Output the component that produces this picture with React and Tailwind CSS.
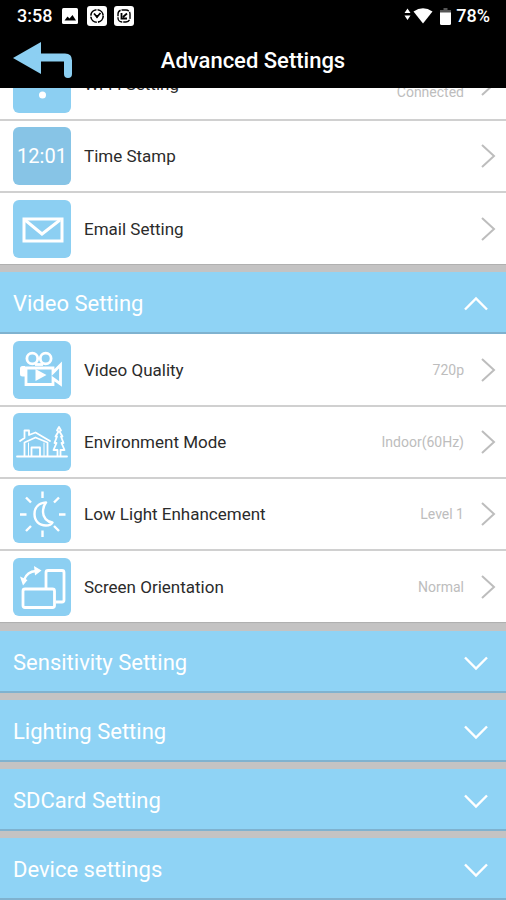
import React from 'react';
import clsx from 'clsx';

const WifiIcon = () => (
    <svg viewBox="0 0 58 58" className="size-full" fill="none" stroke="white" strokeWidth="4" strokeLinecap="round">
        <path d="M10 15 Q29 -1 49 15 M16 22 Q29 11 43 22 M22 28 Q29 23 37 28" />
        <circle cx="29.5" cy="40" r="3.5" fill="white" stroke="none" />
    </svg>
);

const ClockIcon = () => (
    <svg viewBox="0 0 58 58" className="size-full" fill="white">
        <text x="29" y="36" textAnchor="middle" fontSize="20">12:01</text>
    </svg>
);

const MailIcon = () => (
    <svg viewBox="0 0 58 58" className="size-full" fill="none" stroke="white" strokeWidth="3">
        <rect x="11" y="19" width="38" height="22" />
        <path d="M12 20 L29 34 L47 20" />
    </svg>
);

const CameraIcon = () => (
    <svg viewBox="0 0 58 58" className="size-full" fill="none" stroke="white" strokeWidth="2.8">
        <circle cx="19.3" cy="17.5" r="5.4" />
        <circle cx="32.7" cy="17.5" r="5.4" />
        <path d="M22 23.5 H30" />
        <path d="M13 27 H40 V31.500 L47.500 24 V43 L40 37.500 V43.500 H13 Z" />
        <path d="M12 25 H9.500 Q7 25 7 27.500 V33 Q7 35.500 9.500 35.500 H12 Z" fill="white" stroke="none" />
        <path d="M22.500 28 L33.500 34 L22.500 40 Z" fill="white" stroke="none" />
    </svg>
);

const HouseIcon = () => (
    <svg viewBox="0 0 58 58" className="size-full" fill="none" stroke="white" strokeWidth="1.8" strokeLinejoin="round" strokeLinecap="round">
        <path d="M4 43.500 H54" />
        <path d="M7 28 L11.500 25 V17.500 H16 V22 L22.500 19.500 L37 28" />
        <path d="M11.500 43 V29.500 L22.500 24.500 L34.500 29.500 V43" />
        <path d="M15.500 43 V30 M31 43 V30" strokeWidth="1" />
        <path d="M18.500 43 V34.500 H27 V43" />
        <path d="M46 14 L48 17.500 L46.500 18.500 L49.500 23.500 H48 L50.500 30 H48.500 L51.500 37 H47.500 V43 M46 14 L44 17.500 L45.500 18.500 L42.500 23.500 H44 L41.500 30 H43.500 L40.500 37 H44.500 V43" />
    </svg>
);

const MoonIcon = () => (
    <svg viewBox="0 0 58 58" className="size-full" fill="none" stroke="white" strokeWidth="2.4" strokeLinejoin="round">
        <path d="M33 17.500 C25 18 21.500 23 21.500 29 C21.500 36 26 40.500 33 40.500 C36 40.500 38.500 39.500 39.500 37.500 C34 37 30 32.500 30 27 C30 23 31 20 33 17.500 Z" />
        <path d="M29.500 6.500 V13 M29.500 45.500 V52 M7 29.500 H13.500 M46 29.500 H52.500 M13 12.500 L18 17.500 M46 12.500 L41 17.500 M13 46 L18 41 M46 46 L41 41" />
    </svg>
);

const RotateIcon = () => (
    <svg viewBox="0 0 58 58" className="size-full" fill="none" stroke="white" strokeWidth="2.8">
        <path d="M33 30 V14.500 Q33 12.500 35 12.500 H49 Q51 12.500 51 14.500 V42 Q51 44 49 44 H43" />
        <rect x="10" y="31" width="31.500" height="18.500" rx="2" />
        <path d="M11 22 Q14 13.500 23 13" strokeWidth="2.400" />
        <path d="M21 8 L28.500 12.500 L22 17.500 Z M7 18.500 L14.500 22 L10 27.500 Z" fill="white" stroke="none" />
    </svg>
);

const networkItems = [
    { label: 'Wi-Fi Setting', value: 'Connected', icon: WifiIcon, lowValue: true },
    { label: 'Time Stamp', icon: ClockIcon, muted: true },
    { label: 'Email Setting', icon: MailIcon },
];

const videoItems = [
    { label: 'Video Quality', value: '720p', icon: CameraIcon },
    { label: 'Environment Mode', value: 'Indoor(60Hz)', icon: HouseIcon },
    { label: 'Low Light Enhancement', value: 'Level 1', icon: MoonIcon },
    { label: 'Screen Orientation', value: 'Normal', icon: RotateIcon },
];

const closedSections = ['Sensitivity Setting', 'Lighting Setting', 'SDCard Setting', 'Device settings'];

const StatusBar = () => (
    <div className="flex h-8 items-center pl-[17px] pr-4 text-[18px] font-medium leading-8">
        <span>3:58</span>
        <svg viewBox="0 0 16 16" className="ml-[10px] size-4">
            <rect width="16" height="16" rx="1.500" fill="white" />
            <path d="M2.500 12.500 L5.500 8.500 L7.500 10.500 L10.500 7 L14 12.500 Z" fill="black" />
        </svg>
        <svg viewBox="0 0 20 20" className="ml-[9px] size-5" fill="none" stroke="black">
            <rect width="20" height="20" rx="3" fill="white" stroke="none" />
            <circle cx="10" cy="10" r="6.200" strokeWidth="1.600" strokeDasharray="8.500 1.200" />
            <path d="M7 7.500 L10 11 L13.500 7" strokeWidth="1.800" />
            <path d="M8 9 H12 L10 12.500 Z" fill="black" stroke="none" />
        </svg>
        <svg viewBox="0 0 20 20" className="ml-[7px] size-5" fill="none" stroke="black">
            <rect width="20" height="20" rx="3" fill="white" stroke="none" />
            <rect x="4" y="4" width="12" height="12" rx="4" strokeWidth="1.400" strokeDasharray="7 1" />
            <path d="M7.500 7 V12.500 H13 M9 11 L13 7.500" strokeWidth="1.800" />
        </svg>
        <svg viewBox="0 0 30 18" className="ml-auto h-[18px] w-[30px]" fill="white">
            <path d="M0.500 6 L3.500 1.500 L6.500 6 Z M0.500 8.500 L3.500 13 L6.500 8.500 Z" />
            <path d="M9.500 4.500 Q19 -2 28.500 4.500 L19 16.500 Z" />
        </svg>
        <svg viewBox="0 0 11 17" className="ml-[6px] h-[17px] w-[11px]">
            <path d="M3.500 0 H7.500 V2 H11 V5 H0 V2 H3.500 Z" fill="#555" />
            <path d="M0 4.500 H11 V15.500 Q11 17 9.500 17 H1.500 Q0 17 0 15.500 Z" fill="white" />
        </svg>
        <span className="ml-[5px]">78%</span>
    </div>
);

const SettingRow = ({ label, value, icon: Icon, muted, lowValue }) => (
    <li className="h-[72px] border-b-2 border-[#d0d0d0] last:border-b last:border-[#b0b0b0]">
        <button type="button" className="flex h-full w-full items-center bg-white pl-[13px] pr-[10px] text-left">
            <span className={clsx('size-[58px] shrink-0 rounded-md', muted ? 'bg-[#87c4e6]' : 'bg-[#8ccff2]')}>
                <Icon />
            </span>
            <span className="ml-[13px] flex-1 text-[17px] leading-6 text-[#2b2b2b]">{label}</span>
            {value && (
                <span className={clsx('mr-4 text-[14px] leading-5 text-[#bdbdbd]', lowValue && 'pt-4')}>{value}</span>
            )}
            <svg viewBox="0 0 16 24" className="h-6 w-4" fill="none" stroke="#bdbdbd" strokeWidth="2">
                <path d="M2 1 L14 12 L2 23" />
            </svg>
        </button>
    </li>
);

const SectionHeader = ({ title, open }) => (
    <h2>
        <button
            type="button"
            aria-expanded={!!open}
            className="flex h-[62px] w-full items-center justify-between border-b-2 border-[#7fb2cf] bg-[#8fd3f5] pl-[13px] pr-[17px] pt-1 text-left text-[22px] leading-8 text-white"
        >
            {title}
            <svg viewBox="0 0 26 16" className="h-4 w-[26px]" fill="none" stroke="white" strokeWidth="2.400">
                <path d={open ? 'M2 13.500 L13 2.500 L24 13.500' : 'M2 2.500 L13 13.500 L24 2.500'} />
            </svg>
        </button>
    </h2>
);

export default function App() {
    return (
        <div className="flex h-screen flex-col bg-[#c4c3c3] font-[Roboto,sans-serif]">
            <header className="shrink-0 bg-black text-white">
                <StatusBar />
                <div className="grid h-14 grid-cols-[72px_1fr_72px] items-center">
                    <button type="button" aria-label="Back" className="pl-3">
                        <svg viewBox="0 0 60 38" className="h-[38px] w-[60px]">
                            <path d="M1 17 L29 1 V33 Z" fill="#8ccff2" />
                            <path d="M28 16.500 H53 Q56 16.500 56 19.500 V33" fill="none" stroke="#8ccff2" strokeWidth="8" strokeLinecap="round" />
                        </svg>
                    </button>
                    <h1 className="pt-0.5 text-center text-[22px] font-medium leading-8">Advanced Settings</h1>
                </div>
            </header>

            {/* list rests at its scrolled-down end */}
            <main className="flex min-h-0 flex-1 flex-col justify-end overflow-hidden">
                <div className="flex shrink-0 flex-col gap-[7px]">
                    <ul>
                        {networkItems.map((item) => (
                            <SettingRow key={item.label} {...item} />
                        ))}
                    </ul>
                    <section>
                        <SectionHeader title="Video Setting" open />
                        <ul className="border-y border-y-[#c2c2c2] border-t-white">
                            {videoItems.map((item) => (
                                <SettingRow key={item.label} {...item} />
                            ))}
                        </ul>
                    </section>
                    {closedSections.map((title) => (
                        <SectionHeader key={title} title={title} />
                    ))}
                </div>
            </main>
        </div>
    );
}
